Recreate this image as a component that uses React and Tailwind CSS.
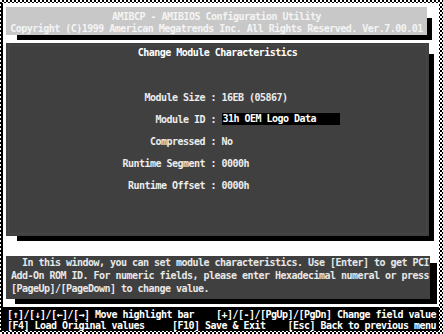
export default function App() {
  const fields = [
    ["Module Size", "16EB (05867)", false],
    ["Module ID", "31h OEM Logo Data", true],
    ["Compressed", "No", false],
    ["Runtime Segment", "0000h", false],
    ["Runtime Offset", "0000h", false],
  ];
  return (
    <div className="w-[443px] h-[334px] overflow-hidden bg-[repeating-conic-gradient(#000_0_25%,#fff_0_50%)] bg-[length:4px_4px] pt-[3px] pl-[1px] pr-[4px] pb-[3px] font-['DejaVu_Sans_Mono',monospace] text-[10px] tracking-[-0.52px] font-bold">
      <div className="h-[328px] bg-white border-l-2 border-black flex flex-col">
        {/* Title box */}
        <div className="ml-[3px] mt-[4px] w-[421px] h-[28px] bg-[#c8c8c8] text-[#f4f4f4] pt-[4px] leading-[12px] text-center whitespace-pre shadow-[8px_8px_0_-3px_#000]">
          <div>AMIBCP - AMIBIOS Configuration Utility</div>
          <div>Copyright (C)1999 American Megatrends Inc. All Rights Reserved. Ver.7.00.01</div>
        </div>

        {/* Main panel */}
        <div className="ml-[3px] mt-[8px] w-[423px] h-[194px] bg-[#404040] shadow-[8px_8px_0_-3px_#000] p-[2px]">
          <div className="h-full border border-[#474747] text-[#ececec]">
            <div className="mt-[1px] h-[11px] leading-[11px] text-center text-white">Change Module Characteristics</div>
            <div className="mt-[28px] flex flex-col">
              {fields.map(([label, value, hl]) => (
                <div key={label} className="flex h-[22px] items-center whitespace-pre">
                  <div className="w-[196px] text-right">{label}</div>
                  <div> : </div>
                  {hl ? (
                    <div className="w-[118px] h-[12px] leading-[12px] bg-black text-white pl-[1px]">{value}</div>
                  ) : (
                    <div>{value}</div>
                  )}
                </div>
              ))}
            </div>
          </div>
        </div>

        {/* Help panel */}
        <div className="ml-[3px] mt-[20px] w-[424px] h-[43px] bg-[#404040] shadow-[8px_6px_0_-1px_#000] pl-[5px] pt-[0px] leading-[13px] text-[#e8e8e8] whitespace-pre">
          <div>{"  In this window, you can set module characteristics. Use [Enter] to get PCI"}</div>
          <div>Add-On ROM ID. For numeric fields, please enter Hexadecimal numeral or press</div>
          <div>[PageUp]/[PageDown] to change value.</div>
        </div>

        {/* Status bar */}
        <div className="mt-[8px] flex-1 bg-black text-white pl-[4px] pt-[2px] leading-[11px] whitespace-pre">
          <div>{"[\u2191]/[\u2193]/[\u2190]/[\u2192] Move highlight bar    [+]/[-]/[PgUp]/[PgDn] Change field value"}</div>
          <div>{"[F4] Load Original values     [F10] Save & Exit    [Esc] Back to previous menu"}</div>
        </div>
      </div>
    </div>
  );
}
